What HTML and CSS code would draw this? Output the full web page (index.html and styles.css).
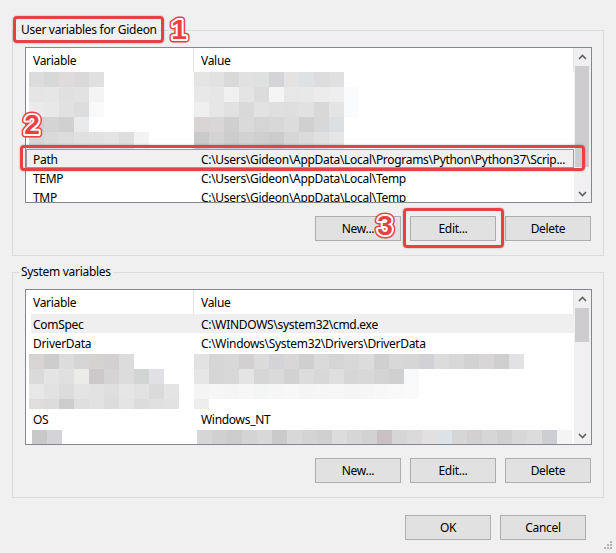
FILE: index.html
```html
<!DOCTYPE html>
<html lang="en">
<head>
    <meta charset="UTF-8">
    <title>Environment Variables</title>
    <link rel="stylesheet" href="styles.css">
</head>
<body>
<div class="dialog">
    <fieldset class="group">
        <legend>User variables for Gideon</legend>
        <div class="list">
            <div class="list-body">
                <div class="list-head"><span class="col-var">Variable</span><span class="col-val">Value</span></div>
                <svg class="mosaic" id="m1" width="547" height="77"></svg>
                <div class="row focused"><span class="col-var">Path</span><span class="col-val">C:\Users\Gideon\AppData\Local\Programs\Python\Python37\Scrip...</span></div>
                <div class="row"><span class="col-var">TEMP</span><span class="col-val">C:\Users\Gideon\AppData\Local\Temp</span></div>
                <div class="row"><span class="col-var">TMP</span><span class="col-val">C:\Users\Gideon\AppData\Local\Temp</span></div>
            </div>
            <div class="scrollbar">
                <div class="sb-btn"><svg width="9" height="6"><path d="M1 5 L4.5 1.5 L8 5"/></svg></div>
                <div class="sb-track"><div class="sb-thumb" style="height: 101px"></div></div>
                <div class="sb-btn"><svg width="9" height="6"><path d="M1 1 L4.5 4.5 L8 1"/></svg></div>
            </div>
        </div>
        <div class="btn-row">
            <button class="btn">New...</button>
            <button class="btn">Edit...</button>
            <button class="btn">Delete</button>
        </div>
    </fieldset>

    <fieldset class="group group-system">
        <legend>System variables</legend>
        <div class="list">
            <div class="list-body">
                <div class="list-head"><span class="col-var">Variable</span><span class="col-val">Value</span></div>
                <div class="row hover"><span class="col-var">ComSpec</span><span class="col-val">C:\WINDOWS\system32\cmd.exe</span></div>
                <div class="row"><span class="col-var">DriverData</span><span class="col-val">C:\Windows\System32\Drivers\DriverData</span></div>
                <svg class="mosaic" id="m2" width="547" height="57"></svg>
                <div class="row"><span class="col-var">OS</span><span class="col-val">Windows_NT</span></div>
                <svg class="mosaic" id="m3" width="547" height="19"></svg>
            </div>
            <div class="scrollbar">
                <div class="sb-btn"><svg width="9" height="6"><path d="M1 5 L4.5 1.5 L8 5"/></svg></div>
                <div class="sb-track"><div class="sb-thumb" style="height: 34px"></div></div>
                <div class="sb-btn"><svg width="9" height="6"><path d="M1 1 L4.5 4.5 L8 1"/></svg></div>
            </div>
        </div>
        <div class="btn-row">
            <button class="btn">New...</button>
            <button class="btn">Edit...</button>
            <button class="btn">Delete</button>
        </div>
    </fieldset>

    <div class="dialog-buttons">
        <button class="btn">OK</button>
        <button class="btn">Cancel</button>
    </div>

    <svg class="grip" width="9" height="9">
        <rect x="6" y="0" width="2" height="2"/>
        <rect x="3" y="3" width="2" height="2"/><rect x="6" y="3" width="2" height="2"/>
        <rect x="0" y="6" width="2" height="2"/><rect x="3" y="6" width="2" height="2"/><rect x="6" y="6" width="2" height="2"/>
    </svg>

    <!-- annotations -->
    <div class="callout callout-1"></div>
    <div class="callout callout-2"></div>
    <div class="callout callout-3"></div>
    <svg class="mark mark-1" width="26" height="34"><text x="13" y="27" class="m-out">1</text><text x="13" y="27" class="m-in">1</text><text x="13" y="27" class="m-fill">1</text></svg>
    <svg class="mark mark-2" width="26" height="34"><text x="13" y="27" class="m-out">2</text><text x="13" y="27" class="m-in">2</text><text x="13" y="27" class="m-fill">2</text></svg>
    <svg class="mark mark-3" width="26" height="34"><text x="13" y="27" class="m-out">3</text><text x="13" y="27" class="m-in">3</text><text x="13" y="27" class="m-fill">3</text></svg>
</div>

<script>
    // blurred (pixelated) rows, 15px blocks
    var mosaics = {
        m1: [
            [0, 15, 3, "dcdcdc d7d9d8 dfdbdb d9d9d9 e0e0e0"],
            [0, 15, 168, "e5e5e5 e2e2e2 d9d9d9 e1e1e1 dfe0e0 d4d3d8 e5e2e2 dfe2e5 dedcdd e0e0e2"],
            [15, 15, 3, "e5e5e5 e6e6e6 e0e0e0 e2e2e2 f4f4f4"],
            [15, 15, 168, "e8e8e8 e6e6e6 f0f0f0 e4e4e4 dcdcdc f5f5f5 e7e7e7 e8e8e8 ececec eeeeee fafbfd"],
            [30, 15, 3, "eaeaea e8e8e8 e1e1e1 dddddd f8f9fb"],
            [30, 15, 168, "efefef e6e6e6 e1e1e1 d9d9d9 e2e2e2 dfdfdf dedede e1e1e1 d8d8d8 e4e4e4 fafbfd"],
            [45, 15, 3, "cecece d4d4d4 d0d0d0 e8eaec"],
            [45, 15, 168, "d8d4d4 d8d6d6 cfcfcf dadada d5d5d5 d8d8d8 dcdcdc d0d0d0 d8d8d8 dcdfe1"],
            [60, 17, 3, "d6d6d6 dadada dcdcdc e0e0e0 e2e2e2 e4e4e4 dedede f3f3f5"],
            [60, 17, 168, "cacaca d4d4d4 cdcdcd d2d2d2 cfcfcf cccccc d6d6d6 dbdbdb e0e0e0 e6e6e6"]
        ],
        m2: [
            [2, 15, 3, "d8d4d4 cdcdcd dcdcdc d5d5d5 d6d2d2 d2d0d0 dcdcdc"],
            [2, 15, 168, "e2e2e2 d6d6d6 d8d8d8 d2d0d0 dbdbdb d4d4d8 d8d6d6 cfcfcf dadada d5d5d5 d8d8d8 dcdcdc d0d0d0 d8d8d8 d6d6d6 d2d2d6 dcdcdc d8d8d8 d2d2d2 d8d6d6 cfcfcf e2e2e4"],
            [17, 15, 3, "dadada e4e4e4 e0e0e0 ebebea cdc9ca d5d3d3 dcdcdc d3d5d4 e1e0e4"],
            [17, 15, 168, "e6e6e6 d5d5d5 d8d8d8 e4e4e4 d6d6d6 dadada d2d2d2 dcdcdc d8d8d8 dedede d6d6d6 d8d8d8 d4d4d4 d0d0d0 f8f9fb"],
            [32, 15, 3, "e8e8e8 e2e2e2 dcdcdc e4e4e4 e2e2e2 dedede e6e6e6 e2e2e2 dadada e4e4e4"],
            [32, 15, 168, "f4f4f4 f6f6f6 f5f5f5 f7f7f7 f4f5f5 f6f6f6 f8f8f8 f5f5f5 f6f6f6 f7f7f7 f5f5f5 f6f6f6 f8f8f8 f9f9f9 fafafa"],
            [47, 11, 3, "e0dddd dcdcdc cfcccf dedede e2e2e2 dcdcdc e4e4e4 dcdcdc e0e0e0 e2e2e2"],
            [47, 11, 168, "ededed"]
        ],
        m3: [
            [2, 17, 6, "c8c8c8 d3d3d8"],
            [2, 17, 171, "d6d6d6 d0d0d0 cccccc d4d4d4 d8d8d8 cacaca d8d8d8 d4d4d4 d0d0d0 dcdcdc d6d6d6 d2d2d2 c8c0c4 d6d6d6 dadada e2e0e0 dde2e6 d6d6d6 d2d0d0 d6d6d6 d0d0d0 d8d8d8 dcdcdc cdcdd4 f4f4f4"]
        ]
    };

    Object.keys(mosaics).forEach(function (id) {
        var svg = document.getElementById(id);
        mosaics[id].forEach(function (r) {
            r[3].split(" ").forEach(function (c, i) {
                var rect = document.createElementNS("http://www.w3.org/2000/svg", "rect");
                rect.setAttribute("x", r[2] + i * 15);
                rect.setAttribute("y", r[0]);
                rect.setAttribute("width", 15);
                rect.setAttribute("height", r[1]);
                rect.setAttribute("fill", "#" + c);
                svg.appendChild(rect);
            });
        });
    });
</script>
</body>
</html>
```

FILE: styles.css
```css
body {
    margin: 0;
    background-color: #f0f0f0;
    font-family: "Noto Sans", "Liberation Sans", sans-serif;
    font-size: 12px;
    letter-spacing: -0.3px;
    color: #000;
}
.dialog {
    position: relative;
    width: 616px;
    height: 553px;
    padding-top: 23px;
    box-sizing: border-box;
}
.group {
    margin: 0 12px;
    padding: 10px 11px 14px 12px;
    border: 1px solid #dcdcdc;
    min-width: 0;
}
.group-system {
    margin-top: 9px;
}
.group legend {
    margin-left: -6px;
    padding: 0 2px;
    line-height: 14px;
}
.list {
    display: flex;
    height: 156px;
    border: 1px solid #828790;
    background-color: #fff;
    box-sizing: border-box;
}
.list-body {
    flex: 1;
    overflow: hidden;
    white-space: nowrap;
}
.list-head {
    display: flex;
    height: 24px;
    padding-top: 1px;
    box-sizing: border-box;
    align-items: center;
    border-right: 1px solid #e5e5e5;
}
.list-head .col-var {
    align-self: stretch;
    display: flex;
    align-items: center;
    margin-top: -1px;
    padding-top: 1px;
    border-right: 1px solid #e5e5e5;
}
.col-var {
    width: 168px;
    padding-left: 7px;
    box-sizing: border-box;
    flex: none;
}
.col-val {
    padding-left: 7px;
}
.row {
    display: flex;
    height: 19px;
    padding-top: 1px;
    box-sizing: border-box;
    align-items: center;
}
.row.focused {
    background-color: #f0f0f0;
    box-shadow: inset 0 0 0 1px #9a9a9a;
}
.row.hover {
    background-color: #efefef;
    margin-left: 5px;
}
.row.hover .col-var {
    width: 163px;
    padding-left: 2px;
}
.mosaic {
    display: block;
}
.scrollbar {
    width: 17px;
    display: flex;
    flex-direction: column;
    background-color: #f0f0f0;
}
.sb-btn {
    height: 17px;
    display: flex;
    align-items: center;
    justify-content: center;
}
.sb-btn path {
    fill: none;
    stroke: #606060;
    stroke-width: 1.6;
}
.sb-track {
    flex: 1;
    padding: 1px 2px 0 1px;
}
.sb-thumb {
    background-color: #cdcdcd;
}
.btn-row {
    display: flex;
    justify-content: flex-end;
    gap: 9px;
    margin-top: 13px;
    padding-right: 1px;
}
.btn {
    width: 86px;
    height: 25px;
    padding: 0;
    border: 1px solid #adadad;
    background-color: #e1e1e1;
    font-family: inherit;
    font-size: 12px;
    letter-spacing: -0.3px;
    color: #000;
}
.dialog-buttons {
    display: flex;
    justify-content: flex-end;
    gap: 9px;
    margin-top: 17px;
    padding-right: 30px;
}
.grip {
    position: absolute;
    right: 3px;
    bottom: 3px;
    fill: #b4b4b4;
}

/* red annotations */
.callout {
    position: absolute;
    border: 3px solid #e84141;
    border-radius: 4px;
    box-shadow: 0 0 2px rgba(0, 0, 0, 0.35);
    box-sizing: border-box;
}
.callout-1 { left: 13px; top: 16px; width: 151px; height: 27px; }
.callout-2 { left: 20px; top: 145px; width: 565px; height: 26px; }
.callout-3 { left: 403px; top: 208px; width: 101px; height: 40px; }
.mark {
    position: absolute;
    font-family: "Liberation Sans", sans-serif;
    font-weight: bold;
    font-size: 28px;
    letter-spacing: 0;
}
.mark text {
    text-anchor: middle;
    stroke-linejoin: round;
}
.mark .m-out { fill: #e84141; stroke: #e84141; stroke-width: 7px; }
.mark .m-in { fill: #e84141; stroke: #fff; stroke-width: 4px; }
.mark .m-fill { fill: #e84141; }
.mark-1 { left: 166px; top: 12px; }
.mark-2 { left: 19px; top: 107px; }
.mark-3 { left: 372px; top: 208px; }
```
